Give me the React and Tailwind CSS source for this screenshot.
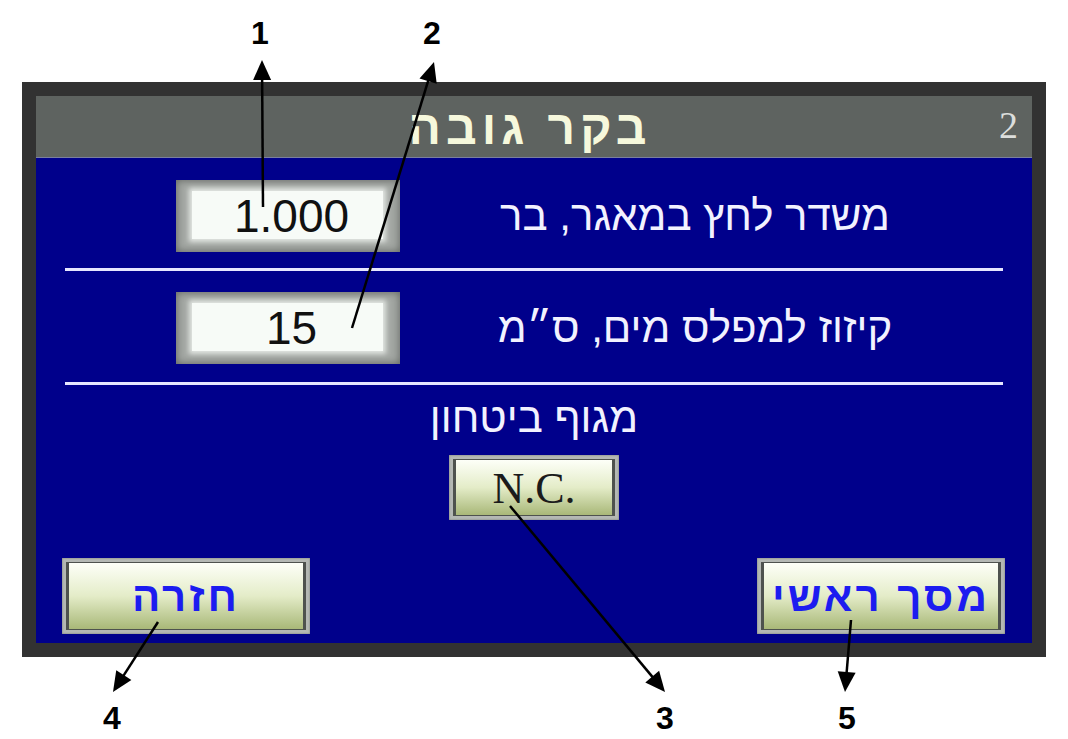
import React from "react";

const heb = { fontFamily: '"Liberation Sans", "DejaVu Sans", sans-serif' };
const serif = { fontFamily: '"Liberation Serif", "DejaVu Serif", serif' };

function ValueBox({ value }) {
    return (
        <div className="w-[224px] h-[72px] bg-[#a4a8a4] pl-[16px] pr-[17px] pt-[11px] pb-[13px] shadow-[inset_0_0_8px_#5c605c]">
            <div
                className="h-full bg-[#f7fbf7] flex items-center justify-center pl-2 pt-[2px] text-[46px] text-[#111] shadow-[0_0_5px_3px_#e4e8e4]"
                style={heb}
            >
                {value}
            </div>
        </div>
    );
}

function PanelButton({ label, className, textClass, font }) {
    return (
        <div className={`bg-[#b4b8b4] p-[4px] shadow-[inset_0_0_2px_#6a6e6a] ${className}`}>
            <div
                className={`h-full flex items-center justify-center border-x-[3px] border-y border-[#4e524e] bg-gradient-to-b from-[#fdfff8] via-[#e4ecc8] to-[#a9b878] ${textClass}`}
                style={font}
            >
                {label}
            </div>
        </div>
    );
}

function Arrow({ x1, y1, x2, y2 }) {
    const dx = x2 - x1;
    const dy = y2 - y1;
    const len = Math.hypot(dx, dy);
    const ux = dx / len;
    const uy = dy / len;
    const head = 20;
    const half = 9;
    const bx = x2 - ux * head;
    const by = y2 - uy * head;
    const pts = `${x2},${y2} ${bx - uy * half},${by + ux * half} ${bx + uy * half},${by - ux * half}`;
    return (
        <g>
            <line x1={x1} y1={y1} x2={bx + ux * 2} y2={by + uy * 2} stroke="#000" strokeWidth="2.5" />
            <polygon points={pts} fill="#000" />
        </g>
    );
}

export default function App() {
    return (
        <div className="relative w-[1068px] h-[739px] bg-white overflow-hidden">
            <div className="pt-[82px] pl-[22px]">
                <div className="w-[1024px] h-[575px] bg-[#323232] p-[14px]">
                    <div className="h-full flex flex-col">
                        <div className="relative h-[62px] bg-[#5e6360] flex items-center justify-center border-b border-[#7a7fa0]">
                            <span
                                className="text-[48px] leading-none font-bold tracking-[5px] text-[#f6f8dc] pr-[8px] pt-[2px]"
                                style={heb}
                                dir="rtl"
                            >
                                בקר גובה
                            </span>
                            <span className="absolute right-[14px] top-[10px] text-[38px] leading-none text-[#dcdedc]" style={serif}>
                                2
                            </span>
                        </div>

                        <div className="flex-1 bg-[#00008b] flex flex-col">
                            <div className="flex items-center mt-[22px] pl-[140px] pr-[42px]">
                                <ValueBox value="1.000" />
                                <div className="flex-1 text-center text-[42px] leading-none text-[#f2f2ff]" style={heb} dir="rtl">
                                    משדר לחץ במאגר, בר
                                </div>
                            </div>
                            <div className="mt-[16px] mx-[29px] h-[3px] bg-[#e6e6ff]" />

                            <div className="flex items-center mt-[21px] pl-[140px] pr-[42px]">
                                <ValueBox value="15" />
                                <div className="flex-1 text-center text-[42px] leading-none text-[#f2f2ff]" style={heb} dir="rtl">
                                    קיזוז למפלס מים, ס״מ
                                </div>
                            </div>
                            <div className="mt-[18px] mx-[29px] h-[3px] bg-[#e6e6ff]" />

                            <div
                                className="mt-[15px] h-[36px] leading-[36px] text-center text-[42px] text-[#f2f2ff]"
                                style={heb}
                                dir="rtl"
                            >
                                מגוף ביטחון
                            </div>
                            <div className="mt-[19px] flex justify-center">
                                <PanelButton
                                    label="N.C."
                                    className="w-[170px] h-[65px]"
                                    textClass="text-[44px] text-[#1b1b1b] pt-[2px]"
                                    font={serif}
                                />
                            </div>

                            <div className="mt-[38px] flex justify-between pl-[26px] pr-[27px]">
                                <PanelButton
                                    label="חזרה"
                                    className="w-[248px] h-[76px]"
                                    textClass="text-[42px] font-bold text-[#1c1cf0] tracking-[3px]"
                                    font={heb}
                                />
                                <PanelButton
                                    label="מסך ראשי"
                                    className="w-[248px] h-[76px]"
                                    textClass="text-[42px] font-bold text-[#1c1cf0] tracking-[3px]"
                                    font={heb}
                                />
                            </div>
                        </div>
                    </div>
                </div>
            </div>

            <svg className="absolute inset-0 pointer-events-none" width="1068" height="739" viewBox="0 0 1068 739">
                <g fontFamily="Liberation Sans, Arial, sans-serif" fontWeight="bold" fontSize="32" textAnchor="middle" fill="#000">
                    <text x="260" y="44">1</text>
                    <text x="432" y="44">2</text>
                    <text x="665" y="729">3</text>
                    <text x="112" y="729">4</text>
                    <text x="847" y="729">5</text>
                </g>
                <Arrow x1={263} y1={207} x2={262} y2={60} />
                <Arrow x1={352} y1={328} x2={434} y2={62} />
                <Arrow x1={510} y1={506} x2={665} y2={692} />
                <Arrow x1={158} y1={622} x2={113} y2={692} />
                <Arrow x1={851} y1={620} x2={845} y2={692} />
            </svg>
        </div>
    );
}
